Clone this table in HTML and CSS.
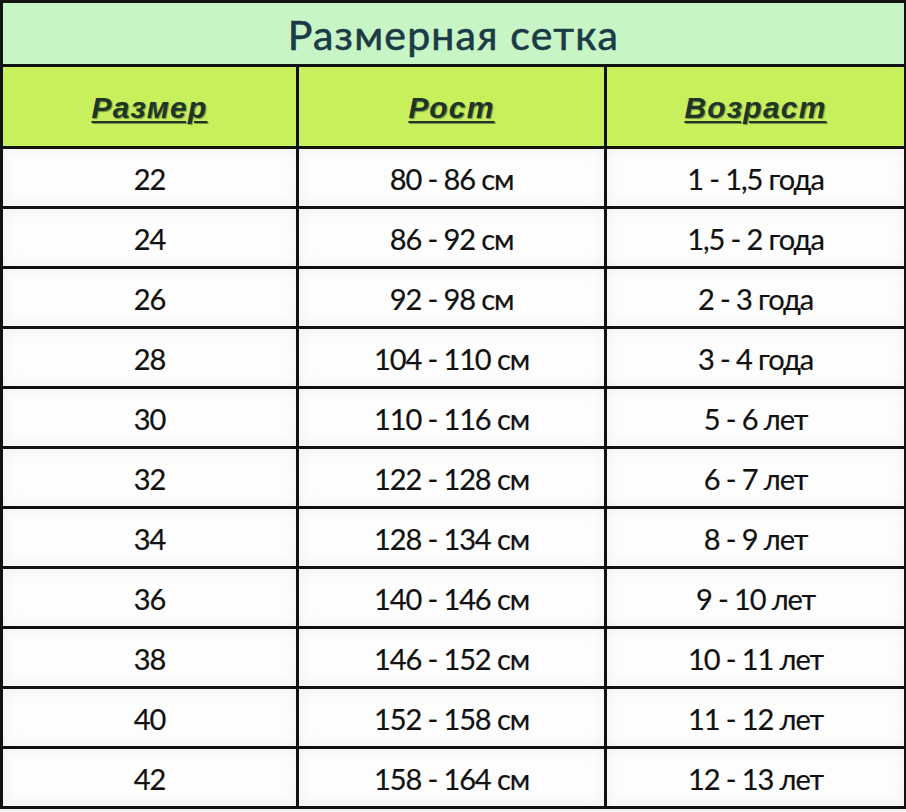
FILE: index.html
```html
<!DOCTYPE html>
<html lang="ru">
<head>
<meta charset="utf-8">
<title>Размерная сетка</title>
<link rel="stylesheet" href="styles.css">
</head>
<body>
<div class="chart">
  <div class="title">Размерная сетка</div>
  <div class="head"><span>Размер</span></div>
  <div class="head"><span>Рост</span></div>
  <div class="head"><span>Возраст</span></div>

  <div class="cell">22</div><div class="cell">80 - 86 см</div><div class="cell">1 - 1,5 года</div>
  <div class="cell">24</div><div class="cell">86 - 92 см</div><div class="cell">1,5 - 2 года</div>
  <div class="cell">26</div><div class="cell">92 - 98 см</div><div class="cell">2 - 3 года</div>
  <div class="cell">28</div><div class="cell">104 - 110 см</div><div class="cell">3 - 4 года</div>
  <div class="cell">30</div><div class="cell">110 - 116 см</div><div class="cell">5 - 6 лет</div>
  <div class="cell">32</div><div class="cell">122 - 128 см</div><div class="cell">6 - 7 лет</div>
  <div class="cell">34</div><div class="cell">128 - 134 см</div><div class="cell">8 - 9 лет</div>
  <div class="cell">36</div><div class="cell">140 - 146 см</div><div class="cell">9 - 10 лет</div>
  <div class="cell">38</div><div class="cell">146 - 152 см</div><div class="cell">10 - 11 лет</div>
  <div class="cell">40</div><div class="cell">152 - 158 см</div><div class="cell">11 - 12 лет</div>
  <div class="cell">42</div><div class="cell">158 - 164 см</div><div class="cell">12 - 13 лет</div>
</div>
</body>
</html>
```

FILE: styles.css
```css
html, body {
  margin: 0;
  padding: 0;
  background: #f2f2f2;
}

.chart {
  width: 906px;
  box-sizing: border-box;
  display: grid;
  grid-template-columns: 293px 305px 297px;
  grid-template-rows: 61px 79px;
  grid-auto-rows: 57px;
  gap: 3px;
  padding: 3px;
  background: #121212;
  font-family: Lato, "Open Sans", sans-serif;
}

.title {
  grid-column: 1 / -1;
  background: #c8f5c6;
  color: #1b3b47;
  font-size: 41px;
  letter-spacing: 1.2px;
  -webkit-text-stroke: 0.6px #1b3b47;
  display: flex;
  align-items: center;
  justify-content: center;
  padding-top: 2px;
}

.head {
  background: #c8f05c;
  display: flex;
  align-items: center;
  justify-content: center;
}

.head span {
  font-family: "Liberation Sans", Arial, sans-serif;
  font-weight: bold;
  font-style: italic;
  font-size: 30px;
  letter-spacing: 1.2px;
  color: #1f3527;
  text-decoration: underline;
  text-decoration-thickness: 2px;
  text-underline-offset: 3px;
  text-shadow: 1px 1px 1px rgba(40, 60, 40, 0.5);
  padding-top: 2px;
}

.cell {
  background: #fdfdfd;
  box-shadow: inset 0 0 14px #efefef;
  color: #111;
  font-size: 29px;
  letter-spacing: -1.1px;
  -webkit-text-stroke: 0.2px #111;
  display: flex;
  align-items: center;
  justify-content: center;
  padding-top: 2px;
}
```
